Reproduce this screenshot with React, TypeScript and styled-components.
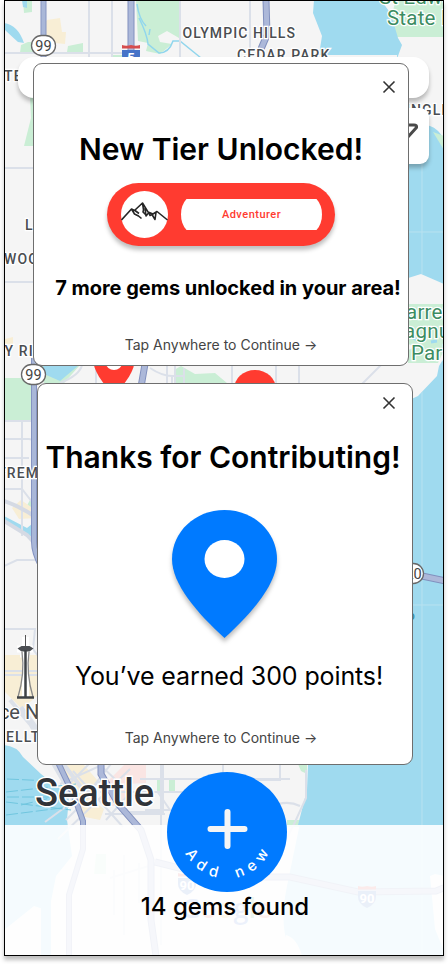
import React from "react";
import styled, { createGlobalStyle } from "styled-components";

const GlobalStyle = createGlobalStyle`
  * { box-sizing: border-box; }
  body { margin: 0; background: #fff; font-family: Inter, "Liberation Sans", sans-serif; color: #000; }
`;

const Stage = styled.div`
  width: 448px;
  height: 964px;
  padding: 0 4px 8px;
  overflow: hidden;
`;

const Phone = styled.main`
  position: relative;
  width: 440px;
  height: 956px;
  overflow: hidden;
  background: #f5f5f5;
  &::after {
    content: "";
    position: absolute;
    inset: 0;
    border: 1px solid #000;
    pointer-events: none;
  }
`;

const Shell = styled.div`
  width: 440px;
  height: 956px;
  box-shadow: 0 4px 4px rgba(0, 0, 0, 0.25);
`;

const MapCanvas = styled.svg`
  position: absolute;
  inset: 0;
  display: block;
`;

const Controls = styled.div`
  position: absolute;
  top: 57px;
  left: 14px;
  right: 15px;
  display: flex;
  flex-direction: column;
  align-items: flex-end;
  gap: 10px;
`;

const SearchBar = styled.div`
  width: 100%;
  height: 41px;
  border-radius: 16px;
  background: #fff;
  box-shadow: 0 4px 4px rgba(0, 0, 0, 0.25);
`;

const FilterButton = styled.button`
  width: 56px;
  height: 56px;
  padding: 0 11px 0 0;
  border: 0;
  border-radius: 9px;
  background: #fff;
  box-shadow: 0 4px 4px rgba(0, 0, 0, 0.25);
  display: flex;
  align-items: center;
  justify-content: flex-end;
`;

const BottomSheet = styled.section`
  position: absolute;
  left: 0;
  right: 0;
  bottom: 0;
  height: 131px;
  background: rgba(255, 255, 255, 0.89);
  display: flex;
  flex-direction: column;
  align-items: center;
`;

const AddButton = styled.button`
  width: 120px;
  height: 120px;
  margin: -53px 0 0 6px;
  padding: 0;
  border: 0;
  border-radius: 50%;
  background: #007aff;
  flex: none;
`;

const GemCount = styled.div`
  margin-left: 2px;
  font-size: 24px;
  font-weight: 500;
  line-height: 29px;
  white-space: nowrap;
`;

const Dialogs = styled.div`
  position: absolute;
  top: 63px;
  left: 29px;
  display: flex;
  flex-direction: column;
  gap: 17px;
`;

const Card = styled.section<{ $height: number; $indent?: number }>`
  width: 376px;
  height: ${(p) => p.$height}px;
  margin-left: ${(p) => p.$indent ?? 0}px;
  border: 1px solid #6e6e6e;
  border-radius: 9px;
  background: #fff;
  display: flex;
  flex-direction: column;
  align-items: center;
`;

const CloseRow = styled.div<{ $right: number; $top: number }>`
  align-self: stretch;
  height: 46px;
  padding: ${(p) => p.$top}px ${(p) => p.$right}px 0 0;
  display: flex;
  justify-content: flex-end;
  align-items: flex-start;
`;

const CloseButton = styled.button`
  width: 14px;
  height: 14px;
  padding: 0;
  border: 0;
  background: none;
  display: flex;
`;

const Title = styled.h2<{ $top: number; $shift?: number }>`
  margin: ${(p) => p.$top}px ${(p) => p.$shift ?? 0}px 0 0;
  font-size: 30px;
  line-height: 39px;
  font-weight: 600;
  letter-spacing: 0;
  white-space: nowrap;
`;

const TierBadge = styled.div`
  width: 228px;
  height: 63px;
  margin-top: 14px;
  padding: 0 12px 0 14px;
  border-radius: 32px;
  background: #ff3b30;
  box-shadow: 0 4px 4px rgba(0, 0, 0, 0.25);
  display: flex;
  align-items: center;
  gap: 13px;
`;

const TierPlate = styled.div`
  position: relative;
  width: 141px;
  height: 31px;
  display: grid;
  place-items: center;
  color: #ff3b30;
  font: 500 11px/14px Roboto, sans-serif;
  letter-spacing: 0.5px;
`;

const PlateShape = styled.svg`
  position: absolute;
  inset: 0;
`;

const PlateText = styled.span`
  position: relative;
`;

const GemsLine = styled.p`
  margin: 30px 0 0 14px;
  font-size: 20px;
  line-height: 24px;
  font-weight: 700;
  letter-spacing: -0.02px;
  white-space: nowrap;
`;

const PointsLine = styled.p`
  margin: 23px 0 0 8px;
  font-size: 25px;
  line-height: 31px;
  font-weight: 400;
  letter-spacing: -0.12px;
  white-space: nowrap;
`;

const Hint = styled.p<{ $shift: number; $bottom: number }>`
  margin: auto ${(p) => p.$shift}px ${(p) => p.$bottom}px 0;
  font-size: 14px;
  line-height: 17px;
  color: #444;
  white-space: nowrap;
`;

const PinArt = styled.svg`
  display: block;
  margin: 33px 0 0 -2px;
  overflow: visible;
  filter: drop-shadow(0 4px 2px rgba(0, 0, 0, 0.25));
`;

const MapLabel = styled.text`
  font-family: Roboto, sans-serif;
  font-size: 14px;
  font-weight: 500;
  letter-spacing: 1.1px;
  fill: #4a4d51;
  stroke: #fff;
  stroke-width: 2.5px;
  paint-order: stroke;
`;

const ParkLabel = styled(MapLabel)`
  font-size: 20.5px;
  font-weight: 400;
  letter-spacing: 0.2px;
  fill: #3c8c62;
`;

const PlaceLabel = styled(MapLabel)`
  font-size: 20px;
  letter-spacing: 0;
  font-weight: 400;
`;

const CityLabel = styled(MapLabel)`
  font-size: 38px;
  letter-spacing: 0;
  fill: #303338;
  stroke-width: 3px;
`;

const WaterLabel = styled(MapLabel)`
  font-size: 12px;
  fill: #358fa5;
  stroke: none;
`;

const RouteText = styled.text`
  font-family: Roboto, sans-serif;
  font-size: 14.5px;
  text-anchor: middle;
  fill: #444;
`;

const InterstateText = styled(RouteText)`
  font-weight: 700;
  font-size: 13px;
  fill: #fff;
`;

const Watermark = styled.text`
  font-family: "Open Sans", sans-serif;
  font-weight: 600;
  font-size: 27px;
`;

const CurvedText = styled.text`
  font-family: Inter, sans-serif;
  font-size: 15px;
  font-weight: 500;
  letter-spacing: 6px;
  word-spacing: 4px;
  text-anchor: middle;
  fill: #fff;
`;

function Route({ x, y, label, textX = x }: { x: number; y: number; label: string; textX?: number }) {
  return (
    <g>
      <rect x={x - 12} y={y - 10} width="24" height="20" rx="10" fill="#fff" stroke="#686868" strokeWidth="1.3" />
      <RouteText x={textX} y={y + 5}>{label}</RouteText>
    </g>
  );
}

function Interstate({ x, y, label }: { x: number; y: number; label: string }) {
  return (
    <g>
      <path d={`M${x - 9} ${y - 11}q4 1.500 9 0q5 1.500 9 0v3.500h-18z`} fill="#d64d4d" />
      <path d={`M${x - 9} ${y - 6}h18v6q0 7-9 11q-9-4-9-11z`} fill="#4673c8" />
      <InterstateText x={x} y={y + 6}>{label}</InterstateText>
    </g>
  );
}

const HIGHWAY_WEST = "M43.500 0v60M34 358v184q0 10 7 24l14 190 19 40 9 25v28l-14 46v61";
const HIGHWAY_MAIN =
  "M131 0v50M266 0l1 35-6 14M145 364l-4 23M101 760v14l18 31 22 25 10 30v60l5 36M155 862l60 15h75l68 15 78-1 10-4M422 576l24 5";

function CityMap() {
  return (
    <MapCanvas width="440" height="956" viewBox="4 0 440 956">
      <rect x="4" width="440" height="956" fill="#f5f5f5" />
      {/* Parks */}
      <g fill="#caeed5">
        <path d="M23 0h9v12l-8 1zM21 45l7-3h14v11H20zM68 46l15-3v9H67zM112 55h20v10h-22z" />
        <path d="M136 0h43v38l-12-7-9 5 2 6 12 2-12 10-14-3 2-8-10-2z" />
        <path d="M30 96h14v50H24l7-28zM4 378h32v43H4zM30 500l-6 11h13v-13z" />
        <path d="M396 0h48v37h-48l-9-6zM174 370l7-4 14 8 20-1 12 10h-53zM295 757h12v17l-6-3zM287 820h14v7h-14z" />
        <path d="M157 780h6v11h-6zM169 780h6v12h-6zM40 365h40l-16 18H44z" />
        <path d="M96 854h10v20H94z" />
      </g>
      <g fill="#f8eed5">
        <path d="M47 20l13-2 2 14h4l-1 12-20-2-2-16zM4 655h34v40l-16 14-18-18zM12 508l9-8 16 11v7l-18 1zM5 339l8-2v7H5z" />
        <path d="M62 765h22l14 16-10 16 16 12-4 11-20-4z" />
      </g>
      <path d="M124 765h22v18l-20 1v22h-17v-26z" fill="#fae5e3" />
      {/* Water */}
      <g fill="#9fdaef">
        <path d="M4 23q14 2 20 20l-6-1q-10-9-14-13zM22 0h5v8l-4-1z" />
        <path d="M314 0h67l10 14 7 24 4 7-8 22 15 32v21l21 6q9 3 15 15v155h-48V55h-78l3-19-9-23z" />
        <path d="M408 400l10-8 5-8 14-16 2-12 5-3v603h-70q20-60 0-131h-76l9-35 1-25 99-13z" />
        <path d="M300 823h144v133H292q-14-28-5-70z" />
        <path d="M4 745q13 1 19 12l18 17 28 22-2 24 5 36-16 20-7 35-15-5-30 24z" />
        <path d="M4 516l23 12 10-8v18l-10-3-23-14zM43 365h36l-19 16-16-7z" />
        <path d="M41 885h10v71H41z" />
      </g>
      <path d="M433 132l11 4v14z" fill="#caeed5" />
      <g fill="#f5f5f5">
        <path d="M405 279l16-5 23 10v74l-5 8-2 10-19 20-13 6z" />
        <path d="M430 876l5-2 9 2v75l-9-22zM286 935q11 3 16 21h-20z" />
      </g>
      <path d="M408 304h36v46l-6 13h-30v-13l10-3-10-3z" fill="#caeed5" />
      <path d="M412 337l5 3 4-4m10 6l6-1m-25 7l4 2" stroke="#9fdaef" strokeWidth="3" fill="none" />
      <path d="M137 4q2 15 9 22m-7-8q8 16 9 26l11 9q10 0 14-12h7l21 17M150 29l-1 6" fill="none" stroke="#91d6ed" strokeWidth="1.5" />
      {/* Streets */}
      <g fill="none" stroke="#dbe0e9" strokeWidth="2">
        <path d="M4 53h121M89 0v60M112 0v60M180 0v60M250 0v60M4 168h36M4 282h36M4 421h33M4 439h25q9 1 9 8M22 421v115M4 458h25M4 489h18l17 22M4 566l13-6h20M4 629h31l-2 20 5 7M4 671h34M4 675h34M96 365v20M150 368q12 8 22 8v8m-5-18v18m8-18v18m-3-8h12v8M184 368v16M232 365v20M276 365v20M299 365v20M381 365l-19 19M60 383q20-8 22-18" />
        <path d="M38 710l50 55-24 24 14 19-12 12m-6-36l55-25-35 44m-7-32l50 56m-78-5l61-45m-48 62l72-70M100 765l30 28-24 27m-6-28h110M163 760v52h-34M140 779h150M223 760v20h57v-20M145 810h25l-13-19m4-26v180M105 814h60" />
        <path d="M306 770v28l-11 24-12 24m-5-42q12-3 22 2M110 878l45-14 30 5M114 870v45m10-60v80m15-72v40" />
      </g>
      <path d="M4 501q20 7 34 18M4 521l23 14 13 14" fill="none" stroke="#d5dae4" strokeWidth="4" />
      <path d="M10 700l56 67m-41-52l44 76m-48-84l68 91" stroke="#dce1e9" strokeWidth="4" fill="none" />
      <path d="M422 164v110M422 392v564M409 232h35M409 605h35" stroke="#b8e2f0" fill="none" />
      <path d="M6 792l70-8M7 797h61M6 802l65 8M6 815l63-8M21 805l50-12M7 779l44 2" stroke="#70c6df" strokeWidth="1" strokeDasharray="12 3" />
      {/* Highways */}
      <g fill="none">
        <path d={HIGHWAY_WEST} stroke="#8594c2" strokeWidth="6" />
        <path d={HIGHWAY_WEST} stroke="#a9b7d8" strokeWidth="4" />
        <path d={HIGHWAY_MAIN} stroke="#8190be" strokeWidth="7" />
        <path d={HIGHWAY_MAIN} stroke="#acb8d9" strokeWidth="5" />
      </g>
      {/* Labels */}
      <Route x={43.5} y={45.5} label="99" />
      <Route x={33.5} y={374.5} label="99" />
      <Route x={411.5} y={573.5} textX={409.5} label="520" />
      <Interstate x={131} y={56} label="5" />
      <Interstate x={187} y={884} label="90" />
      <Interstate x={367} y={897} label="90" />
      <MapLabel x="182.500" y="37.500">OLYMPIC HILLS</MapLabel>
      <MapLabel x="237" y="60">CEDAR PARK</MapLabel>
      <MapLabel x="4" y="81">TER</MapLabel>
      <MapLabel x="25" y="230">LAKE</MapLabel>
      <MapLabel x="4" y="264">WOOD</MapLabel>
      <MapLabel x="4.500" y="356">Y RIDGE</MapLabel>
      <MapLabel x="-2" y="478">FREMONT</MapLabel>
      <MapLabel x="6" y="742">ELLTOWN</MapLabel>
      <MapLabel x="406" y="115">INGLEW</MapLabel>
      <ParkLabel x="379" y="4">St Edward</ParkLabel>
      <ParkLabel x="387" y="25">State Park</ParkLabel>
      <ParkLabel x="388" y="319">Warren G</ParkLabel>
      <ParkLabel x="386" y="338">Magnuson</ParkLabel>
      <ParkLabel x="411" y="360">Park</ParkLabel>
      <PlaceLabel x="-12" y="718.500">ace Needle</PlaceLabel>
      <CityLabel x="35" y="806">Seattle</CityLabel>
      <WaterLabel x="408" y="620">o</WaterLabel>
      <Watermark x="181" y="918">
        <tspan fill="#5784dc">G</tspan><tspan fill="#de6660">o</tspan><tspan fill="#e4bd51">o</tspan><tspan fill="#5784dc">g</tspan><tspan fill="#56a66b">l</tspan><tspan fill="#de6660">e</tspan>
      </Watermark>
      {/* Space Needle */}
      <g fill="none">
        <path d="M25.500 637v16M17 649h16M20 654h10M25.500 653v44" stroke="#fff" strokeWidth="7" />
        <path d="M25.500 635v12" stroke="#555" strokeWidth="1" />
        <path d="M21.500 646h8l4 2.500-4 3h-8l-4-3z" fill="#4b4e52" />
        <path d="M22 652q3 22-4 45M29 652q-3 22 4 45" stroke="#888" strokeWidth="1.300" />
        <path d="M25.500 650v47M17 697.500h17" stroke="#3e4145" strokeWidth="2.500" />
      </g>
      {/* Red gem pins */}
      <path d="M93 358c0 13 9 24 21 38c12-14 21-25 21-38z" fill="#ff3b30" />
      <ellipse cx="114" cy="363" rx="8" ry="7" fill="#fff" />
      <ellipse cx="255" cy="389" rx="21" ry="19" fill="#ff3b30" />
    </MapCanvas>
  );
}

function Close() {
  return (
    <CloseButton aria-label="Close">
      <svg width="14" height="14" viewBox="0 0 14 14">
        <path d="M1.500 1.500l11 11m0-11l-11 11" stroke="#333" strokeWidth="1.600" />
      </svg>
    </CloseButton>
  );
}

function Mountain() {
  return (
    <svg width="47" height="47" viewBox="0 0 47 47">
      <circle cx="23.500" cy="23.500" r="23.500" fill="#fff" />
      <path
        d="M.5 29L10.500 18l3 1.500L21.500 12l5.500 9 5 2 4-2.500L46.500 29M10.500 18l3 5 4 2 3 2.500M14 19.500l4 3M21.500 12l1 7-.5 2 3 3M24 17l1 8 3-3.500M28 21.500l1 3 2-1 3 5 1-7"
        fill="none"
        stroke="#252525"
        strokeWidth="1.600"
        strokeLinejoin="round"
      />
    </svg>
  );
}

export default function App() {
  return (
    <>
      <GlobalStyle />
      <Stage>
        <Shell>
          <Phone>
            <CityMap />
            <Controls>
              <SearchBar />
              <FilterButton aria-label="Filter">
                <svg width="28" height="28" viewBox="0 0 28 28">
                  <path d="M2 3h22q3 0 2.500 2.500L17 16v9l-6-3v-6L2 5z" fill="none" stroke="#4a4a4a" strokeWidth="3" strokeLinejoin="round" />
                </svg>
              </FilterButton>
            </Controls>
            <BottomSheet>
              <AddButton>
                <svg width="120" height="120" viewBox="0 0 120 120">
                  <defs><path id="add-arc" d="M13 59.500a47 47 0 0 0 94 0" /></defs>
                  <path d="M60.500 40v34M43.500 57h34" stroke="#f5f5f5" strokeWidth="6" strokeLinecap="round" />
                  <CurvedText><textPath href="#add-arc" startOffset="52.300%">Add new</textPath></CurvedText>
                </svg>
              </AddButton>
              <GemCount>14 gems found</GemCount>
            </BottomSheet>
            <Dialogs>
              <Card $height={303}>
                <CloseRow $right={12} $top={16}><Close /></CloseRow>
                <Title $top={20}>New Tier Unlocked!</Title>
                <TierBadge>
                  <Mountain />
                  <TierPlate>
                    <PlateShape width="141" height="31" viewBox="0 0 141 31">
                      <path d="M5.500 0h130q5.500 6 5.500 15.500t-5.500 15.500h-130q-5.500-6-5.500-15.500t5.500-15.500z" fill="#fff" />
                    </PlateShape>
                    <PlateText>Adventurer</PlateText>
                  </TierPlate>
                </TierBadge>
                <GemsLine>7 more gems unlocked in your area!</GemsLine>
                <Hint $shift={0} $bottom={12}>Tap Anywhere to Continue →</Hint>
              </Card>
              <Card $height={382} $indent={4}>
                <CloseRow $right={16} $top={12}><Close /></CloseRow>
                <Title $top={8} $shift={4}>Thanks for Contributing!</Title>
                <PinArt width="105" height="128" viewBox="0 0 105 128">
                  <path d="M52.500 0C23 0 0 22 0 49c0 25 25 54 52.500 79C80 103 105 74 105 49C105 22 82 0 52.500 0z" fill="#007aff" />
                  <ellipse cx="52.500" cy="49" rx="20" ry="19" fill="#fff" />
                </PinArt>
                <PointsLine>You’ve earned 300 points!</PointsLine>
                <Hint $shift={8} $bottom={18}>Tap Anywhere to Continue →</Hint>
              </Card>
            </Dialogs>
          </Phone>
        </Shell>
      </Stage>
    </>
  );
}
